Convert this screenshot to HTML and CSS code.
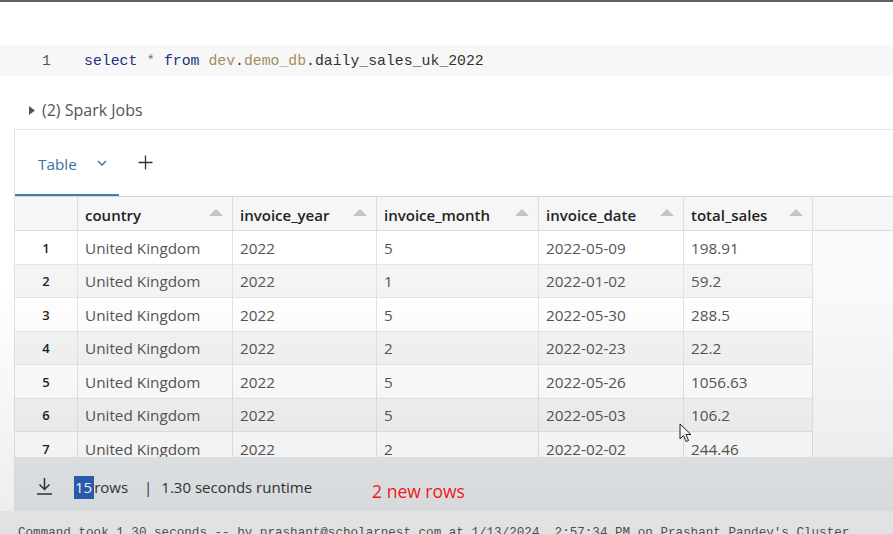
FILE: index.html
```html
<!DOCTYPE html>
<html>
<head>
<meta charset="utf-8">
<link rel="stylesheet" href="styles.css">
</head>
<body>
<div class="topline"></div>
<div class="code">
  <span class="ln">1</span>
  <span class="src"><span class="kw">select</span> <span class="op">*</span> <span class="kw">from</span> <span class="id">dev</span>.<span class="id">demo_db</span>.daily_sales_uk_2022</span>
</div>
<div class="jobs">
  <svg class="caret" width="6" height="9" viewBox="0 0 6 9"><path d="M0 0 L6 4.5 L0 9 Z" fill="#555"/></svg>
  <span>(2) Spark Jobs</span>
</div>
<div class="results">
  <div class="tabs">
    <div class="tab">
      <span class="tab-label">Table</span>
      <svg class="chev" width="10" height="6" viewBox="0 0 10 6"><path d="M1 1 L5 5 L9 1" fill="none" stroke="#3f6fa6" stroke-width="1.4"/></svg>
    </div>
    <svg class="plus" width="15" height="15" viewBox="0 0 15 15"><path d="M7.5 0.5 V14.5 M0.5 7.5 H14.5" stroke="#333" stroke-width="1.3"/></svg>
  </div>
  <div class="table">
    <div class="thead">
      <div class="th c0"></div>
      <div class="th c1"><span>country</span><i class="sort"></i></div>
      <div class="th c2"><span>invoice_year</span><i class="sort"></i></div>
      <div class="th c3"><span>invoice_month</span><i class="sort"></i></div>
      <div class="th c4"><span>invoice_date</span><i class="sort"></i></div>
      <div class="th c5"><span>total_sales</span><i class="sort"></i></div>
      <div class="th filler"></div>
    </div>
    <div class="tbody">
      <div class="tr"><div class="td c0 num">1</div><div class="td c1">United Kingdom</div><div class="td c2">2022</div><div class="td c3">5</div><div class="td c4">2022-05-09</div><div class="td c5">198.91</div></div>
      <div class="tr alt"><div class="td c0 num">2</div><div class="td c1">United Kingdom</div><div class="td c2">2022</div><div class="td c3">1</div><div class="td c4">2022-01-02</div><div class="td c5">59.2</div></div>
      <div class="tr"><div class="td c0 num">3</div><div class="td c1">United Kingdom</div><div class="td c2">2022</div><div class="td c3">5</div><div class="td c4">2022-05-30</div><div class="td c5">288.5</div></div>
      <div class="tr alt"><div class="td c0 num">4</div><div class="td c1">United Kingdom</div><div class="td c2">2022</div><div class="td c3">2</div><div class="td c4">2022-02-23</div><div class="td c5">22.2</div></div>
      <div class="tr"><div class="td c0 num">5</div><div class="td c1">United Kingdom</div><div class="td c2">2022</div><div class="td c3">5</div><div class="td c4">2022-05-26</div><div class="td c5">1056.63</div></div>
      <div class="tr alt"><div class="td c0 num">6</div><div class="td c1">United Kingdom</div><div class="td c2">2022</div><div class="td c3">5</div><div class="td c4">2022-05-03</div><div class="td c5">106.2</div></div>
      <div class="tr"><div class="td c0 num">7</div><div class="td c1">United Kingdom</div><div class="td c2">2022</div><div class="td c3">2</div><div class="td c4">2022-02-02</div><div class="td c5">244.46</div></div>
    </div>
  </div>
  <div class="footer">
    <svg class="dl" width="17" height="18" viewBox="0 0 17 18"><path d="M8.5 1 V12 M3.5 7.5 L8.5 12.5 L13.5 7.5 M1 17 H16" fill="none" stroke="#333" stroke-width="1.5"/></svg>
    <span class="count"><span class="sel">15</span>rows</span>
    <span class="sep">|</span>
    <span class="rt">1.30 seconds runtime</span>
    <span class="note">2 new rows</span>
  </div>
</div>
<div class="cmd">Command took 1.30 seconds -- by prashant@scholarnest.com at 1/13/2024, 2:57:34 PM on Prashant Pandey's Cluster</div>
<svg class="cursor" width="13" height="20" viewBox="0 0 13 20"><path d="M1 1 L1 16 L4.5 12.5 L7 18.5 L9.5 17.5 L7 11.5 L12 11.5 Z" fill="#fff" stroke="#222" stroke-width="1" stroke-linejoin="round"/></svg>
</body>
</html>
```
FILE: styles.css
```css
* { box-sizing: border-box; }
body {
  margin: 0;
  width: 893px;
  height: 534px;
  overflow: hidden;
  position: relative;
  background: #fff;
  font-family: "Open Sans", "Noto Sans", sans-serif;
  color: #333;
}
body::after {
  content: "";
  position: absolute;
  left: 0; top: 0; right: 0; bottom: 0;
  pointer-events: none;
  background: linear-gradient(to bottom, rgba(0,0,0,0) 0, rgba(0,0,0,0) 280px, rgba(0,0,0,0.075) 534px);
}
.topline { height: 2px; background: #626262; }
.code {
  margin-top: 43px;
  height: 31px;
  background: #f7f7f7;
  display: flex;
  align-items: center;
  font-family: "Liberation Mono", "DejaVu Sans Mono", monospace;
  font-size: 14.8px;
  color: #333;
}
.ln { width: 84px; padding-left: 42px; color: #555; }
.kw { color: #1c2f7e; }
.op { color: #777; }
.id { color: #a58c5e; }
.jobs {
  margin-top: 23px;
  height: 22px;
  display: flex;
  align-items: center;
  font-size: 16px;
  color: #555;
  padding-left: 29px;
}
.caret { margin-right: 7px; }
.results {
  margin-top: 8px;
  margin-left: 14px;
  border-top: 1px solid #e4e4e4;
  border-left: 1px solid #e4e4e4;
}
.tabs {
  height: 66px;
  display: flex;
  align-items: stretch;
}
.tab {
  width: 104px;
  border-bottom: 2px solid #4a7bb6;
  display: flex;
  align-items: center;
  padding-left: 23px;
  padding-top: 4px;
}
.tab-label { color: #3f6fa6; font-size: 15.3px; }
.chev { margin-left: 20px; margin-top: -3px; }
.plus { align-self: center; margin-left: 19px; margin-top: -2px; }
.table { border-top: 1px solid #d6d6d6; }
.thead {
  display: flex;
  height: 34px;
  background: #f6f6f6;
  border-bottom: 1px solid #dcdcdc;
}
.th {
  height: 100%;
  display: flex;
  align-items: center;
  justify-content: space-between;
  padding: 0 9px 0 7px;
  border-right: 1px solid #dedede;
  font-weight: 600;
  font-size: 15px;
  color: #222;
}
.th span { padding-top: 2px; }
.th.filler { flex: 1; border-right: none; }
.sort {
  width: 0; height: 0;
  border-left: 7px solid transparent;
  border-right: 7px solid transparent;
  border-bottom: 7px solid #c4c4c4;
  margin-top: -3px;
}
.c0 { width: 63px; }
.c1 { width: 155px; }
.c2 { width: 144px; }
.c3 { width: 162px; }
.c4 { width: 145px; }
.c5 { width: 129px; }
.tbody {
  height: 226px;
  overflow: hidden;
  background: #fafafa;
}
.tr {
  display: flex;
  width: 798px;
  height: 33.5px;
  background: #fff;
  border-bottom: 1px solid #e4e4e4;
}
.tr.alt { background: #f4f4f4; }
.td {
  display: flex;
  align-items: center;
  padding-left: 7px;
  padding-top: 1px;
  border-right: 1px solid #e2e2e2;
  font-size: 15.3px;
  color: #555;
  white-space: nowrap;
}
.td.num {
  justify-content: center;
  padding-left: 0;
  font-size: 13px;
  font-weight: 600;
  color: #222;
}
.footer {
  height: 54px;
  background: #e6eaec;
  display: flex;
  align-items: center;
  font-size: 15px;
  color: #333;
  padding-left: 21px;
  padding-top: 6px;
}
.dl { margin-right: 21px; margin-top: -2px; }
.count { display: flex; align-items: center; }
.sel {
  background: #2c5fb4;
  color: #fff;
  height: 23px;
  line-height: 23px;
  padding: 0 2px 0 1px;
}
.sep { margin-left: 16px; margin-right: 9px; }
.note {
  color: #ff1a1a;
  font-size: 17.5px;
  margin-left: 60px;
  padding-top: 8px;
}
.cmd {
  background: #f3f3f3;
  height: 30px;
  padding-left: 18px;
  padding-top: 15px;
  font-family: "Liberation Mono", monospace;
  font-size: 12.6px;
  color: #555;
  white-space: nowrap;
  overflow: hidden;
}
.cursor {
  position: absolute;
  left: 679px;
  top: 423px;
}
```
